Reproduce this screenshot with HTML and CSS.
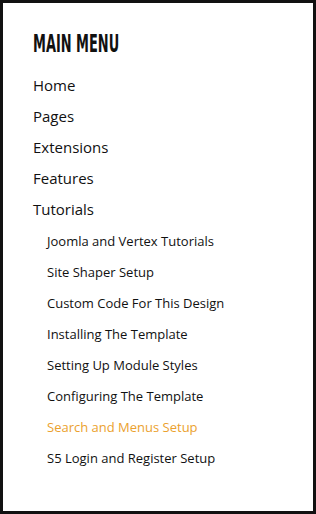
FILE: index.html
```html
<!DOCTYPE html>
<html lang="en">

<head>
    <meta charset="UTF-8">
    <meta name="viewport" content="width=device-width, initial-scale=1.0">
    <title>Main Menu</title>
    <link rel="stylesheet" href="styles.css">
</head>

<body>
    <div class="menu-box">
        <h3 class="menu-title"><span>MAIN MENU</span></h3>
        <ul class="menu">
            <li><a href="#">Home</a></li>
            <li><a href="#">Pages</a></li>
            <li><a href="#">Extensions</a></li>
            <li><a href="#">Features</a></li>
            <li><a href="#">Tutorials</a>
                <ul class="sub-menu">
                    <li><a href="#">Joomla and Vertex Tutorials</a></li>
                    <li><a href="#">Site Shaper Setup</a></li>
                    <li><a href="#">Custom Code For This Design</a></li>
                    <li><a href="#">Installing The Template</a></li>
                    <li><a href="#">Setting Up Module Styles</a></li>
                    <li><a href="#">Configuring The Template</a></li>
                    <li class="active"><a href="#">Search and Menus Setup</a></li>
                    <li><a href="#">S5 Login and Register Setup</a></li>
                </ul>
            </li>
        </ul>
    </div>
</body>

</html>
```

FILE: styles.css
```css
body {
    margin: 0;
    font-family: "Open Sans", "DejaVu Sans", sans-serif;
    background: #fff;
}

ul {
    list-style-type: none;
    margin: 0;
    padding: 0;
}

a {
    color: #111;
    text-decoration: none;
}

.menu-box {
    height: 514px;
    box-sizing: border-box;
    border: 3px solid #111;
    padding: 27px 20px 0 30px;
}

.menu-title {
    margin: 0;
    font-family: "DejaVu Sans Condensed", "DejaVu Sans", sans-serif;
    font-weight: bold;
    font-size: 24px;
    line-height: 28px;
    color: #111;
}

.menu-title span {
    display: inline-block;
    transform: scaleX(0.6);
    transform-origin: left center;
    white-space: nowrap;
}

.menu {
    margin-top: 12px;
}

.menu > li > a {
    display: block;
    font-size: 15px;
    line-height: 31px;
}

.sub-menu {
    padding-left: 14px;
    margin-top: 1px;
}

.sub-menu > li > a {
    display: block;
    font-size: 13px;
    line-height: 31px;
}

.sub-menu > li.active > a {
    color: #eba12e;
}
```
